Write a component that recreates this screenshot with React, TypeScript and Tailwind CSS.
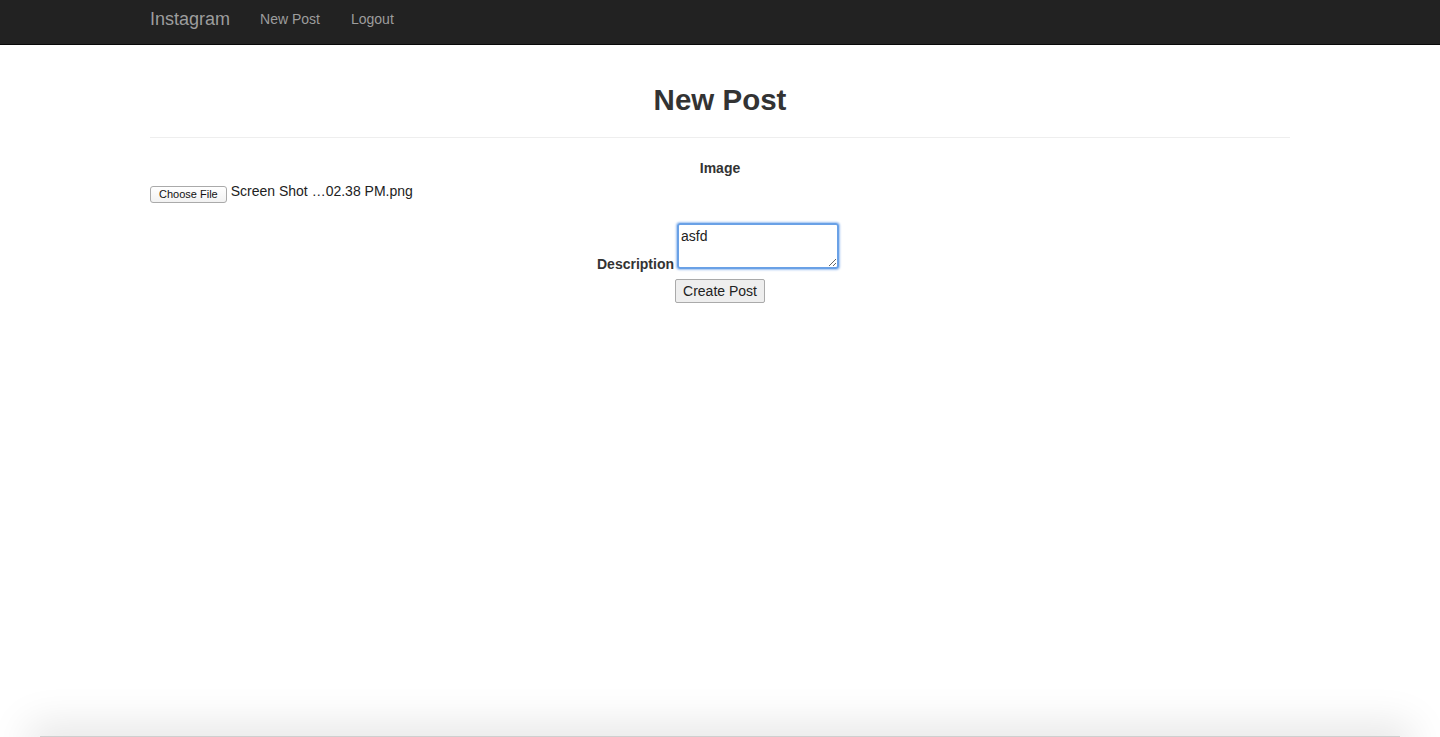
const App = () => {
  return (
    <div className="min-h-[737px] bg-white text-[#333] text-[14px] font-['Liberation_Sans',Arial,sans-serif]">
      <nav className="h-[45px] bg-[#222] border-b border-[#080808]">
        <div className="w-[1140px] mx-auto flex items-center h-[38px]">
          <a className="text-[18px] text-[#9d9d9d] pr-[15px]">Instagram</a>
          <a className="text-[14px] text-[#9d9d9d] px-[15px]">New Post</a>
          <a className="text-[14px] text-[#9d9d9d] px-[15px] ml-[1px]">Logout</a>
        </div>
      </nav>

      <div className="w-[1140px] mx-auto">
        <div className="border-b border-[#eee] pt-[36px] pb-[18px] text-center">
          <h1 className="text-[29.5px] font-bold leading-[38px]">New Post</h1>
        </div>

        <form className="pt-[20px]">
          <div className="text-center font-bold leading-[20px]">Image</div>
          <div className="flex items-center mt-[2px] h-[22px]">
            <button
              type="button"
              className="h-[17px] px-[8px] text-[11px] leading-none text-[#111] border border-[#aaa] rounded-[3px] bg-gradient-to-b from-white to-[#f2f2f2] mt-[6px]"
            >
              Choose File
            </button>
            <span className="ml-[4px] text-[#222]">Screen Shot …02.38 PM.png</span>
          </div>

          <div className="flex justify-center items-end mt-[21px] pr-[4px]">
            <label className="font-bold leading-[14px] mr-[3px] mb-[-2px]">Description</label>
            <textarea
              readOnly
              defaultValue="asfd"
              className="w-[162px] h-[46px] px-[2px] py-[3px] text-[14px] leading-[17px] text-[#222] border-2 border-[#6aa1e6] rounded-[3px] shadow-[0_0_2px_1px_rgba(90,150,230,0.6)] outline-none resize-y"
            />
          </div>

          <div className="flex justify-center mt-[10px]">
            <button
              type="button"
              className="w-[90px] h-[24px] text-[14px] text-[#222] bg-[#eee] border border-[#aaa] rounded-[2px]"
            >
              Create Post
            </button>
          </div>
        </form>
      </div>

      <div className="fixed left-[40px] right-[40px] bottom-[-20px] h-[21px] bg-[#cfcfcf] shadow-[0_0_40px_12px_rgba(0,0,0,0.1)]" />
    </div>
  );
};

export default App;
